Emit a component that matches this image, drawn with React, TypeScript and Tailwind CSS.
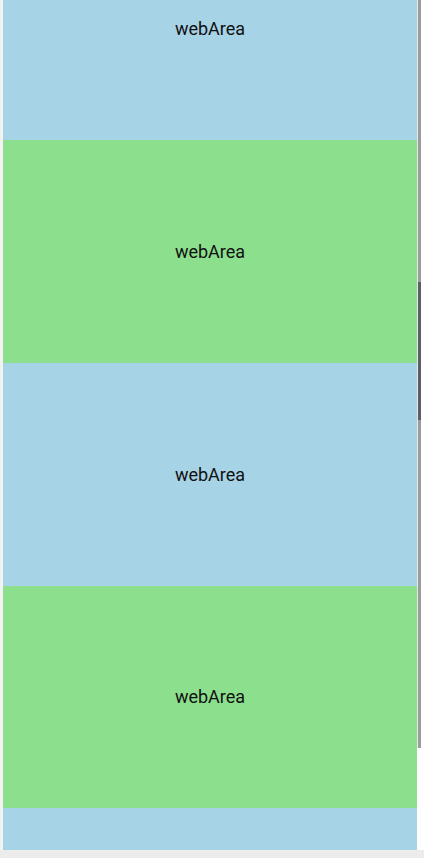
const sections = [
  { color: 'bg-[#a7d3e7]', height: 'h-[140px]', align: 'items-start pt-[17px]', label: true },
  { color: 'bg-[#8ce08d]', height: 'h-[223px]', align: 'items-center', label: true },
  { color: 'bg-[#a7d3e7]', height: 'h-[223px]', align: 'items-center', label: true },
  { color: 'bg-[#8ce08d]', height: 'h-[222px]', align: 'items-center', label: true },
  // only the top edge of the next area is in view
  { color: 'bg-[#a7d3e7]', height: 'h-[42px]', align: 'items-center', label: false },
]

function WebArea({ color, height, align, label }: { color: string; height: string; align: string; label: boolean }) {
  return (
    <div className={`flex shrink-0 justify-center ${color} ${height} ${align}`}>
      {label && <span className="text-[18px] leading-[24px] text-[#111]">webArea</span>}
    </div>
  )
}

export default function App() {
  return (
    <div className="flex h-[858px] w-[424px] flex-col bg-white font-['Roboto',sans-serif]">
      <div className="flex min-h-0 flex-1">
        <div className="w-[3px] shrink-0 bg-[#f2f2f2]" />
        <div className="flex w-[414px] shrink-0 flex-col overflow-hidden">
          {sections.map((s, i) => (
            <WebArea key={i} {...s} />
          ))}
        </div>
        {/* scrollbar */}
        <div className="flex w-[7px] shrink-0">
          <div className="h-[748px] w-[1px] bg-[#e6e6e6]" />
          <div className="flex h-[748px] w-[3px] flex-col bg-[#9c9c9c]">
            <div className="mt-[282px] h-[138px] bg-[#5c6066]" />
          </div>
        </div>
      </div>
      <div className="h-[8px] shrink-0 bg-[#ececec]" />
    </div>
  )
}
